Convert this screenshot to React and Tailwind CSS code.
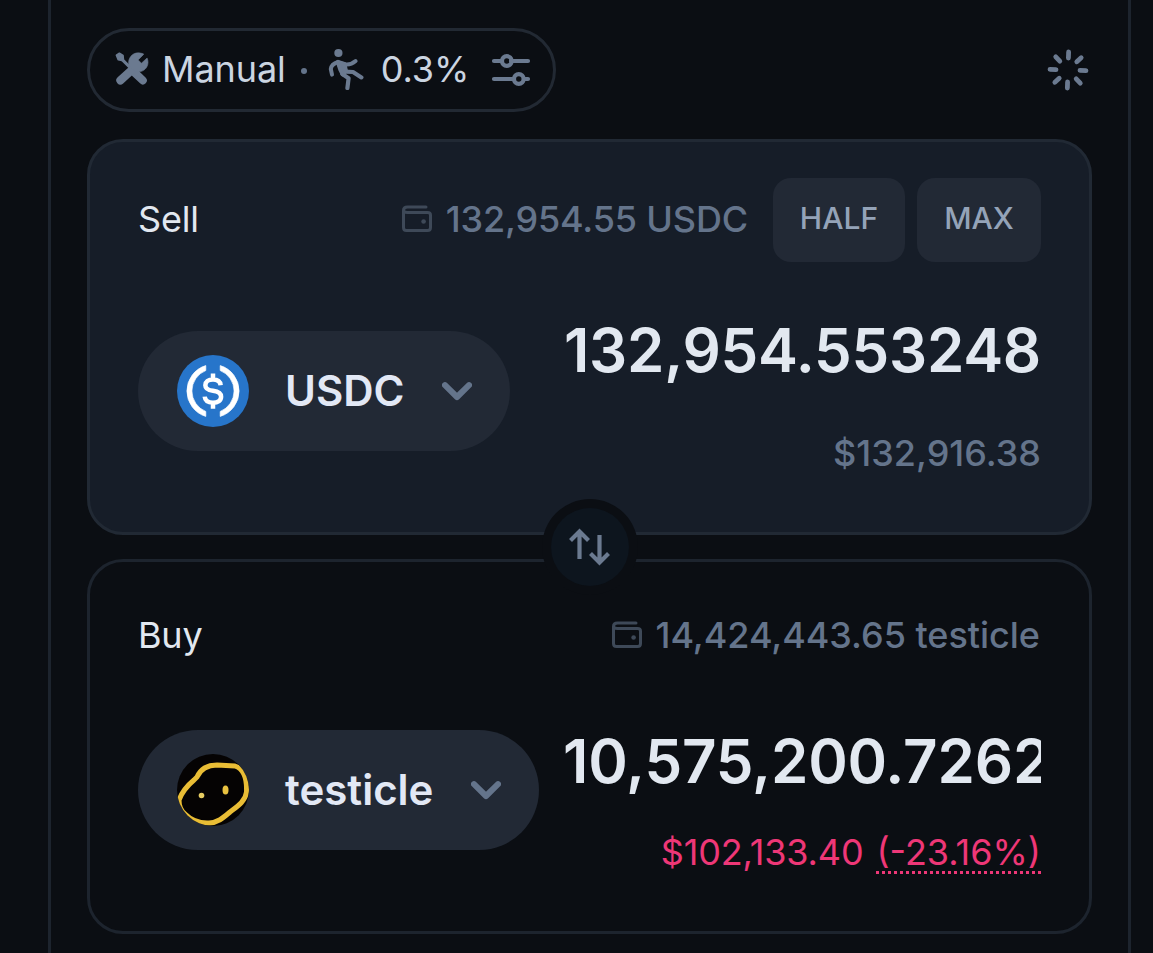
function ToolsIcon() {
  return (
    <svg className="h-9 w-9" viewBox="0 0 36 36" fill="none" stroke="currentColor" strokeLinecap="round" strokeLinejoin="round">
      {/* screwdriver */}
      <path d="M2.4 4.2L5.4 2.2L9 4.4L9.4 8L8 9.4L4.2 8.8Z" fill="currentColor" strokeWidth="1.6" />
      <path d="M8 8.4L15 15.4" strokeWidth="3" />
      <path d="M21 22L28.8 29.4" strokeWidth="8" />
      {/* wrench */}
      <path d="M6.4 29.4L20 17" strokeWidth="8.2" />
      <path
        d="M28.6 2.6C23.5 .8 18.4 2.2 16 6.6C14.5 9.1 14.2 12 15.1 14.6L21.5 20.8C26.5 21.6 31 19.5 33 15.6C34.3 13 34.4 10 33.1 7L27.4 12.2L24.2 8.9L29.6 3.4Z"
        fill="currentColor"
        strokeWidth=".6"
      />
    </svg>
  )
}

function SlippageIcon() {
  return (
    <svg className="h-[42px] w-9" viewBox="0 0 36 42" fill="none" stroke="currentColor" strokeLinecap="round" strokeLinejoin="round">
      <circle cx="10.4" cy="5" r="4.1" fill="currentColor" stroke="none" />
      <path d="M10 14C6 15.2 3.2 18 2.8 21L4 26.6" strokeWidth="4" />
      <path d="M14 15.6C18.6 17.2 23.5 16.6 27.6 13" strokeWidth="4" />
      <path d="M10 14L16.2 16L17.6 22L15 26.4L12.4 21.4Z" fill="currentColor" strokeWidth="4.4" />
      <path d="M14.4 26L20.6 30.2L19.4 40" strokeWidth="4.2" />
      <path d="M17 23.6L25 24L33.4 29.4" strokeWidth="4.2" />
    </svg>
  )
}

function SlidersIcon() {
  return (
    <svg className="h-9 w-10" viewBox="0 0 40 36" fill="none" stroke="currentColor" strokeWidth="4.2" strokeLinecap="round">
      <path d="M3 10H11M20 10H37M3 28H23M33 28H37" />
      <circle cx="15.8" cy="10" r="4.8" />
      <circle cx="27.8" cy="28" r="4.8" />
    </svg>
  )
}

function LoaderIcon() {
  return (
    <svg className="h-12 w-12" viewBox="-24 -24 48 48" stroke="currentColor" strokeWidth="4.8" strokeLinecap="round">
      <g transform="rotate(2)">
        <path d="M0 -18V-12M0 12V18M-18 0H-12M12 0H18M-12.7 -12.7L-8.5 -8.5M8.5 8.5L12.7 12.7M-12.7 12.7L-8.5 8.5M8.5 -8.5L12.7 -12.7" />
      </g>
    </svg>
  )
}

function WalletIcon() {
  return (
    <svg className="h-[30px] w-[30px] text-[#3e4958]" viewBox="0 0 30 30" fill="none" stroke="currentColor" strokeWidth="3" strokeLinecap="round" strokeLinejoin="round">
      <path d="M24 3H5.5C3 3 1.5 4.5 1.5 6.5V23.5C1.5 25.5 2.8 26.5 4.5 26.5H25.5C27.3 26.5 28.5 25.5 28.5 23.5V11C28.5 9.2 27.3 8.5 25.5 8.5H5.5C3 8.5 1.5 7.9 1.5 6" />
      <circle cx="21.6" cy="17.5" r="2.3" fill="currentColor" stroke="none" />
    </svg>
  )
}

function ChevronIcon() {
  return (
    <svg className="ml-auto h-5 w-[30px] text-[#64748b]" viewBox="0 0 30 20" fill="none" stroke="currentColor" strokeWidth="6" strokeLinecap="round" strokeLinejoin="round">
      <path d="M3 4.2L15 16L27 4.2" />
    </svg>
  )
}

function UsdcLogo() {
  return (
    <svg className="h-[72px] w-[72px]" viewBox="0 0 32 32">
      <circle cx="16" cy="16" r="16" fill="#2775ca" />
      <g fill="#fff" stroke="#fff" strokeWidth=".3" strokeLinejoin="round">
        <path d="M12.8 4.7A11.8 11.8 0 0 0 12.8 27.3V25.1A9.8 9.8 0 0 1 12.8 6.9Z" />
        <path d="M19.2 4.7A11.8 11.8 0 0 1 19.2 27.3V25.1A9.8 9.8 0 0 0 19.2 6.9Z" />
      </g>
      <path
        d="M19.4 13.4C19.2 11.7 17.9 10.9 16 10.9C13.9 10.9 12.6 11.9 12.6 13.4C12.6 15 13.8 15.6 16 15.9C18.4 16.2 19.6 17 19.6 18.6C19.6 20.2 18.2 21.2 16 21.2C13.8 21.2 12.5 20.3 12.3 18.5M16 8.2V11M16 21V23.9"
        fill="none"
        stroke="#fff"
        strokeWidth="2"
      />
    </svg>
  )
}

function TesticleLogo() {
  return (
    <svg className="h-[72px] w-[72px] rounded-full" viewBox="0 0 72 72">
      <rect width="72" height="72" fill="#050303" />
      <path
        d="M20 23C24 14 31 11 40 11L58 12C67 15 70 25 69.5 38C68.5 47 61 52 53 58C46 64 41 68.5 32 69C22 69.5 14 66 8 60C3 56 2 50 2 46C5 38 11 31 17 26Z"
        fill="none"
        stroke="#e9bd35"
        strokeWidth="5"
        strokeLinejoin="round"
      />
      <circle cx="24.5" cy="41.5" r="2.8" fill="#e6cc62" />
      <ellipse cx="48.5" cy="36" rx="3" ry="4.5" fill="#e9c240" />
    </svg>
  )
}

function ArrowsIcon() {
  return (
    <svg className="h-10 w-[42px]" viewBox="0 0 42 40" fill="none" stroke="currentColor" strokeWidth="4.2">
      <path d="M10.5 32V5M1.5 13.5L10.5 4.5L19.5 13.5" />
      <path d="M30.5 8V35M21.5 26.5L30.5 35.5L39.5 26.5" />
    </svg>
  )
}

function TokenButton({ logo, symbol, className }) {
  return (
    <button className={`flex h-[120px] shrink-0 items-center rounded-full bg-[#222935] pr-[38px] pl-[39px] ${className}`}>
      {logo}
      <span className="ml-9 text-[42px] leading-none font-semibold text-[#e2e8f5]">{symbol}</span>
      <ChevronIcon />
    </button>
  )
}

function Balance({ children }) {
  return (
    <div className="flex items-center gap-[14px] font-medium text-[#64748b]">
      <WalletIcon />
      <span>{children}</span>
    </div>
  )
}

export default function App() {
  return (
    <main className="flex h-[953px] w-[1153px] overflow-hidden bg-[#0b0e13] pl-12 font-['Inter',sans-serif] text-[36px] leading-[54px] text-[#e2e8f0]">
      <div className="w-[1083px] border-x-[3px] border-[#1d242e] px-9 pt-7">
        {/* Toolbar */}
        <div className="flex items-center justify-between text-[#6b7a90]">
          <button className="flex h-[84px] w-[469px] items-center rounded-full border-[3px] border-[#222933] pb-[2px] pl-6">
            <ToolsIcon />
            <span className="ml-3 tracking-[-0.1px] text-[#cbd5e1]">Manual</span>
            <span className="mt-[3px] ml-[15px] h-[6px] w-[6px] rounded-full bg-[#64748b]" />
            <span className="ml-[21px]">
              <SlippageIcon />
            </span>
            <span className="ml-[17px] text-[#cbd5e1]">0.3%</span>
            <span className="ml-auto pr-[22px]">
              <SlidersIcon />
            </span>
          </button>
          <LoaderIcon />
        </div>

        {/* Sell */}
        <section className="mt-[27px] h-[396px] rounded-[36px] border-[3px] border-[#212934] bg-[#161d28] px-12 pt-9">
          <div className="flex h-[84px] items-center">
            <span className="pb-[2px] tracking-[-0.2px]">Sell</span>
            <div className="ml-auto pb-[2px] tracking-[-0.15px]">
              <Balance>132,954.55 USDC</Balance>
            </div>
            <button className="ml-[25px] h-[84px] w-[132px] rounded-[18px] bg-[#222935] pb-1 text-[30px] font-medium text-[#94a3b8]">HALF</button>
            <button className="ml-3 h-[84px] w-[124px] rounded-[18px] bg-[#222935] pb-1 text-[30px] font-medium text-[#94a3b8]">MAX</button>
          </div>
          <div className="mt-[43px] flex items-start justify-between">
            <TokenButton logo={<UsdcLogo />} symbol="USDC" className="mt-[26px] w-[372px]" />
            <div className="text-right">
              <div className="text-[60px] leading-[90px] font-semibold tracking-[-0.25px]">132,954.553248</div>
              <div className="mt-[31px] font-medium">
                <span className="text-[#64748b]">$132,916.38</span>
              </div>
            </div>
          </div>
        </section>

        {/* Switch direction */}
        <div className="relative z-10 mx-auto -mt-9 -mb-[69px] flex h-24 w-24 items-center justify-center rounded-full bg-[#0b0e13]">
          <button className="flex h-[78px] w-[78px] items-center justify-center rounded-full bg-[#0d151e] text-[#6b7a90]">
            <ArrowsIcon />
          </button>
        </div>

        {/* Buy */}
        <section className="mt-[33px] h-[375px] rounded-[36px] border-[3px] border-[#1d242e] px-12 pt-[46px]">
          <div className="flex items-center justify-between">
            <span className="tracking-[-0.2px]">Buy</span>
            <div className="pr-px tracking-[-0.03px]">
              <Balance>14,424,443.65 testicle</Balance>
            </div>
          </div>
          <div className="mt-[54px] flex items-start">
            <TokenButton logo={<TesticleLogo />} symbol="testicle" className="mt-[14px] w-[401px]" />
            <div className="ml-6 min-w-0 flex-1">
              <div className="overflow-hidden text-[60px] leading-[90px] font-semibold tracking-[-0.15px] whitespace-nowrap">10,575,200.7262</div>
              <div className="mt-[19px] text-right text-[#ee3777]">
                <span className="tracking-[-0.15px]">$102,133.40 </span>
                <span className="ml-[3px] inline-block border-b-[3px] border-dotted leading-[37px]">(-23.16%)</span>
              </div>
            </div>
          </div>
        </section>
      </div>
    </main>
  )
}
